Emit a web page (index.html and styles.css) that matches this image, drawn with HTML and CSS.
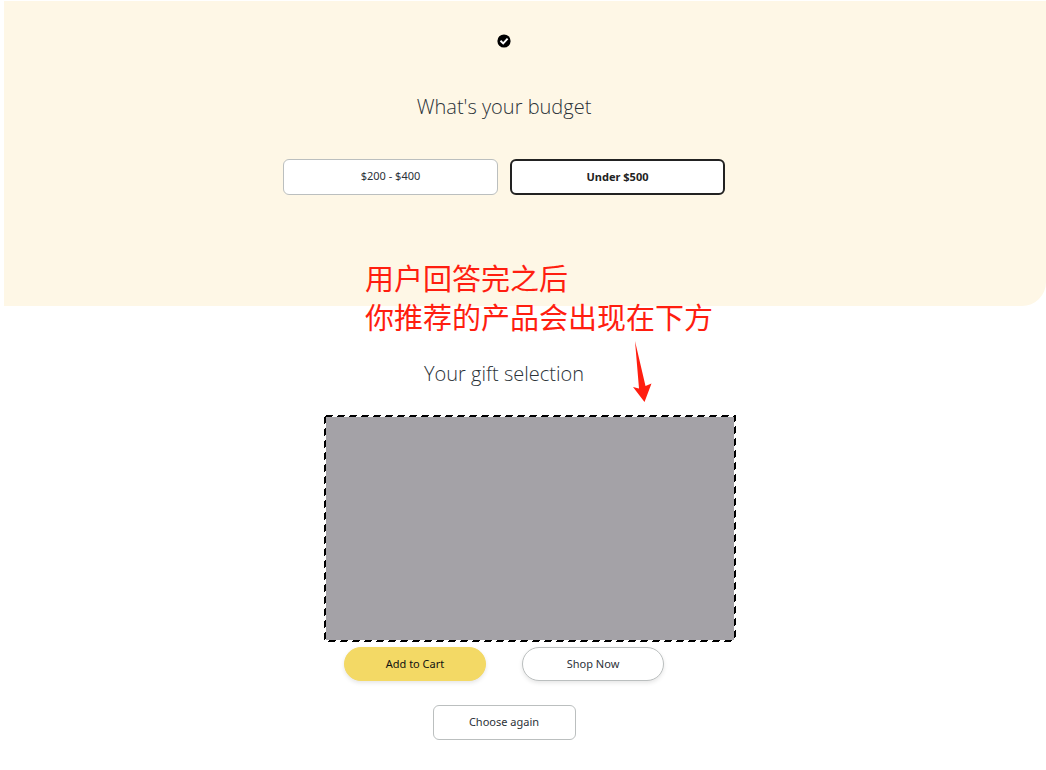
FILE: index.html
```html
<!DOCTYPE html>
<html lang="en">
<head>
  <meta charset="UTF-8" />
  <title>Gift Finder</title>
  <link rel="stylesheet" href="styles.css">
</head>
<body>

  <section class="quiz">
    <svg class="check" viewBox="0 0 14 14" aria-hidden="true">
      <circle cx="7" cy="7" r="6.6" fill="#000" />
      <path d="M3.5 6.8 6.2 9.4 10.6 4.6" fill="none" stroke="#fff" stroke-width="1.9" />
    </svg>
    <h2>What's your budget</h2>
    <div class="options">
      <button type="button" class="option">$200 - $400</button>
      <button type="button" class="option selected">Under $500</button>
    </div>
  </section>

  <section class="result">
    <!-- note for sellers, lies over both sections -->
    <div class="note" lang="zh-CN">
      <p>用户回答完之后<br>你推荐的产品会出现在下方</p>
      <svg class="arrow" viewBox="0 0 20 62" aria-hidden="true">
        <path d="M3 0 13.5 45 19.500 42.500 12.5 61 1 46 7 47.500Z" fill="#ff1e10" />
      </svg>
    </div>

    <h2>Your gift selection</h2>
    <div class="product"><div class="product-image"></div></div>
    <div class="actions">
      <button type="button" class="pill cart">Add to Cart</button>
      <button type="button" class="pill">Shop Now</button>
    </div>
    <button type="button" class="again">Choose again</button>
  </section>

</body>
</html>
```
FILE: styles.css
```css
* { box-sizing: border-box; }
body {
  margin: 0;
  padding: 1px 0 0 4px;
  background-color: white;
  font-family: "Noto Sans", "Noto Sans CJK SC", sans-serif;
  color: #2b3238;
}
.quiz, .result {
  display: flex;
  flex-direction: column;
  align-items: center;
  padding-right: 42px;
}
.quiz {
  padding-top: 33px;
  padding-bottom: 111px;
  background-color: #fef7e6;
  border-bottom-right-radius: 24px;
}
.check { width: 14px; height: 14px; }
h2 {
  margin: 0;
  font-family: "Open Sans", sans-serif;
  font-size: 20px;
  font-weight: 300;
  line-height: 28px;
}
.quiz h2 { margin: 45px 0 38px; }
button {
  border: 1px solid #bbbfbf;
  border-radius: 6px;
  background-color: white;
  color: #2b3238;
  font-family: inherit;
  font-size: 11px;
  cursor: pointer;
}
.options { display: flex; gap: 12px; }
.option {
  width: 215px;
  height: 36px;
  padding: 0 0 4px;
}
.option.selected {
  padding: 0 0 2px;
  border: 2px solid #222;
  color: #222;
  font-weight: bold;
}
.result { position: relative; padding-top: 54px; }
.note {
  position: absolute;
  top: -48px;
  left: calc(50% - 160px);
  color: #ff1e10;
}
.note p {
  margin: 0;
  font-family: "Noto Sans CJK SC", sans-serif;
  font-size: 29px;
  font-weight: 400;
  line-height: 39px;
  white-space: nowrap;
}
.arrow {
  position: absolute;
  top: 83px;
  left: 267px;
  width: 20px;
  height: 62px;
}
/* black and white diagonal stripes show as a dashed outline */
.product {
  width: 412px;
  margin: 27px 0 5px 51px;
  padding: 2px;
  background: linear-gradient(135deg, #fff 12%, #000 12% 40%, #fff 40% 62%, #000 62% 90%, #fff 90%) 0 0 / 12px 12px;
}
.product-image { height: 223px; background-color: #a4a2a7; }
.actions { display: flex; gap: 36px; }
.pill {
  width: 142px;
  height: 34px;
  padding: 0 0 2px;
  border-radius: 17px;
  box-shadow: 0 2px 4px rgba(0, 0, 0, 0.1);
}
.cart { border-color: #f3d965; background-color: #f3d965; color: #111; }
.again {
  width: 143px;
  height: 35px;
  padding: 0 0 2px;
  margin: 24px 0 30px;
}
```
